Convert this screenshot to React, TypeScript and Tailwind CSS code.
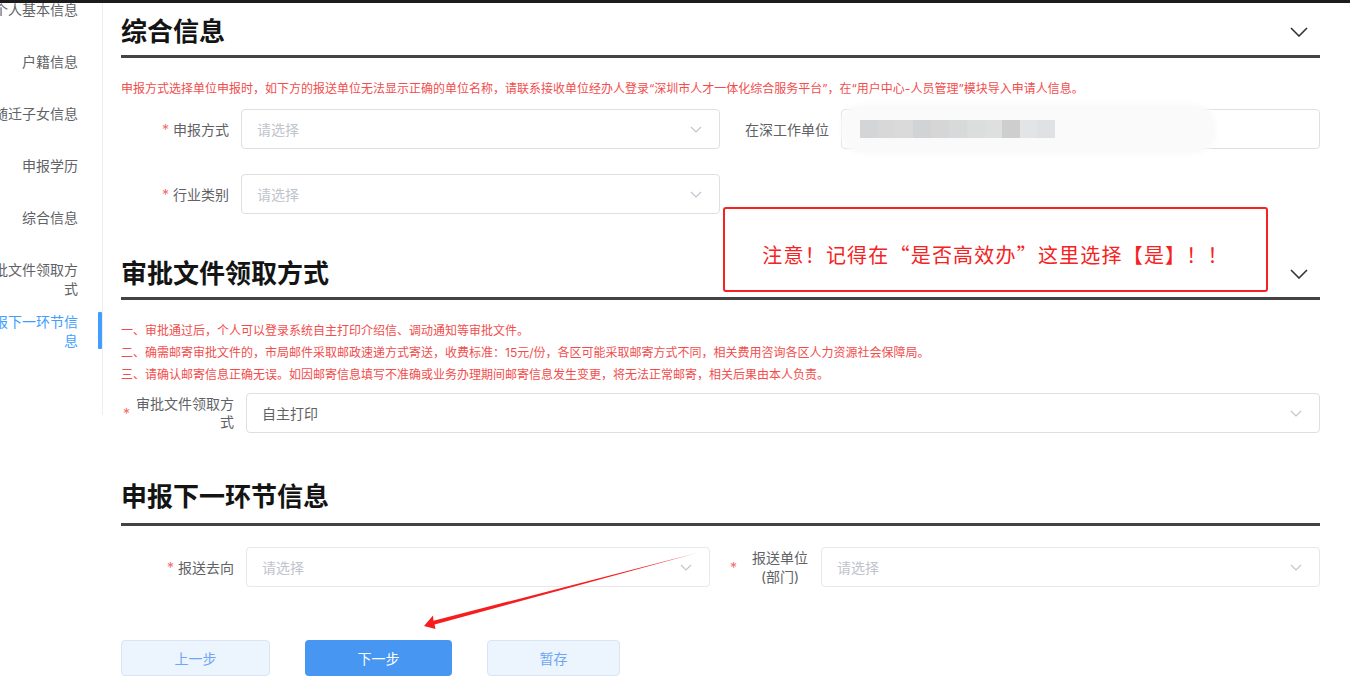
import React from 'react';

const sideItems = [
  '个人基本信息',
  '户籍信息',
  '随迁子女信息',
  '申报学历',
  '综合信息',
  '审批文件领取方式',
  '申报下一环节信息',
];

const blurBlocks = [
  ['w-[18px]', 'bg-[#d4d5d6]'],
  ['w-[17px]', 'bg-[#d8d8d8]'],
  ['w-[18px]', 'bg-[#dadada]'],
  ['w-[18px]', 'bg-[#d2d3d4]'],
  ['w-[18px]', 'bg-[#d6d6d6]'],
  ['w-[18px]', 'bg-[#d8d9da]'],
  ['w-[18px]', 'bg-[#dcdddd]'],
  ['w-[17px]', 'bg-[#dedfdf]'],
  ['w-[18px]', 'bg-[#cecece]'],
  ['w-[17px]', 'bg-[#e3e4e5]'],
  ['w-[18px]', 'bg-[#e0e1e2]'],
];

function Caret() {
  return (
    <svg width="12" height="7" viewBox="0 0 12 7" className="shrink-0">
      <path d="M1 1 L6 6 L11 1" fill="none" stroke="#c0c4cc" strokeWidth="1.1" />
    </svg>
  );
}

function Chevron() {
  return (
    <svg width="18" height="10" viewBox="0 0 18 10" className="ml-auto mr-[12px] shrink-0">
      <path d="M1 1 L9 9 L17 1" fill="none" stroke="#333" strokeWidth="1.6" />
    </svg>
  );
}

function Select({ value, light }: { value?: string; light?: boolean }) {
  return (
    <div
      className={`flex-1 h-[40px] rounded-[4px] border flex items-center justify-between pl-[15px] pr-[17px] ${
        light ? 'border-[#e6e8ee]' : 'border-[#dcdfe6]'
      }`}
    >
      <span className={`text-[14px] ${value ? 'text-[#606266]' : 'text-[#c0c4cc]'}`}>{value ?? '请选择'}</span>
      <Caret />
    </div>
  );
}

function Star() {
  return <span className="text-[#f56c6c] mr-[4px] text-[14px]">*</span>;
}

function Header({ title, chevron, tight }: { title: string; chevron?: boolean; tight?: boolean }) {
  return (
    <div className={`h-[55px] flex items-center border-b-[3px] border-[#434343] ${tight ? '' : 'pt-[6px]'}`}>
      <h2 className="text-[26px] font-bold text-[#141414] leading-none">{title}</h2>
      {chevron && <Chevron />}
    </div>
  );
}

export default function App() {
  return (
    <div className="relative w-[1350px] h-[693px] overflow-hidden bg-white font-['Inter','Noto_Sans_CJK_SC',sans-serif]">
      <div className="relative z-10 h-[3px] bg-[#1c1c1c]" />
      <div className="flex">
        {/* sidebar */}
        <aside className="-mt-[3px] w-[103px] h-[415px] shrink-0 overflow-hidden border-r border-[#eceef3]">
          {sideItems.map((t, i) => {
            const active = i === sideItems.length - 1;
            return (
              <div key={t} className="h-[52px] flex justify-end">
                <div
                  className={`w-[102px] shrink-0 text-right text-[14px] leading-[19px] ${
                    active ? 'text-[#409eff]' : 'text-[#606266]'
                  }`}
                >
                  {t}
                </div>
                <div className="w-[20px] shrink-0" />
                <div className={`w-[4px] h-[37px] shrink-0 rounded-[1px] ${active ? 'bg-[#409eff]' : ''}`} />
              </div>
            );
          })}
        </aside>

        {/* main */}
        <main className="flex-1 pl-[18px] pr-[30px]">
          <Header title="综合信息" chevron />
          <p className="mt-[21px] text-[12px] leading-[20px] text-[#f24d4d]">
            申报方式选择单位申报时，如下方的报送单位无法显示正确的单位名称，请联系接收单位经办人登录“深圳市人才一体化综合服务平台”，在“用户中心-人员管理”模块导入申请人信息。
          </p>
          <div className="mt-[10px] flex">
            <div className="w-[599px] flex">
              <div className="w-[120px] pr-[12px] flex items-center justify-end text-[14px] text-[#606266]">
                <Star />
                申报方式
              </div>
              <Select />
            </div>
            <div className="flex-1 flex">
              <div className="w-[121px] pr-[12px] flex items-center justify-end text-[14px] text-[#606266]">
                在深工作单位
              </div>
              <div className="relative flex-1 h-[40px] rounded-[4px] border border-[#dcdfe6] flex items-center pl-[18px]">
                <div className="absolute left-[-2px] top-[-6px] bottom-[-6px] w-[376px] rounded-[22px] bg-[#fafafa] blur-[2px]" />
                <div className="relative flex h-[18px]">
                  {blurBlocks.map(([w, c], i) => (
                    <div key={i} className={`${w} ${c} h-full`} />
                  ))}
                </div>
              </div>
            </div>
          </div>
          <div className="mt-[25px] flex">
            <div className="w-[599px] flex">
              <div className="w-[120px] pr-[12px] flex items-center justify-end text-[14px] text-[#606266]">
                <Star />
                行业类别
              </div>
              <Select />
            </div>
          </div>

          <div className="mt-[31px]">
            <Header title="审批文件领取方式" chevron />
          </div>
          <div className="mt-[20px] text-[12px] leading-[22px] text-[#f24d4d]">
            <p>一、审批通过后，个人可以登录系统自主打印介绍信、调动通知等审批文件。</p>
            <p>二、确需邮寄审批文件的，市局邮件采取邮政速递方式寄送，收费标准：15元/份，各区可能采取邮寄方式不同，相关费用咨询各区人力资源社会保障局。</p>
            <p>三、请确认邮寄信息正确无误。如因邮寄信息填写不准确或业务办理期间邮寄信息发生变更，将无法正常邮寄，相关后果由本人负责。</p>
          </div>
          <div className="mt-[7px] flex">
            <div className="w-[125px] pr-[12px] pl-[2px] flex items-center justify-between">
              <span className="text-[#f56c6c] text-[14px]">*</span>
              <span className="w-[98px] text-right text-[14px] leading-[18px] text-[#606266]">审批文件领取方式</span>
            </div>
            <Select value="自主打印" />
          </div>

          <div className="mt-[38px]">
            <Header title="申报下一环节信息" tight />
          </div>
          <div className="mt-[21px] flex">
            <div className="w-[589px] flex">
              <div className="w-[125px] pr-[12px] flex items-center justify-end text-[14px] text-[#606266]">
                <Star />
                报送去向
              </div>
              <Select light />
            </div>
            <div className="flex-1 flex">
              <div className="w-[111px] pr-[12px] flex items-center justify-end">
                <span className="text-[#f56c6c] text-[14px]">*</span>
                <span className="ml-[14px] w-[58px] text-center text-[14px] leading-[19px] text-[#606266]">报送单位(部门)</span>
              </div>
              <Select light />
            </div>
          </div>

          <div className="mt-[53px] flex gap-[35px]">
            <button className="w-[149px] h-[36px] rounded-[4px] border border-[#d9e5f5] bg-[#ecf4fe] text-[14px] text-[#6ea6f3]">
              上一步
            </button>
            <button className="w-[147px] h-[36px] rounded-[4px] bg-[#4696f2] text-[14px] text-white">下一步</button>
            <button className="w-[133px] h-[36px] rounded-[4px] border border-[#d9e5f5] bg-[#ecf4fe] text-[14px] text-[#6ea6f3]">
              暂存
            </button>
          </div>
        </main>
      </div>

      {/* annotation box */}
      <div className="absolute left-[723px] top-[207px] w-[545px] h-[85px] border-2 border-[#f52222] rounded-[3px] bg-white flex items-center justify-center pt-[11px]">
        <span className="font-['Noto_Sans_CJK_SC',sans-serif] text-[20px] text-[#f52222] tracking-[1.2px]">
          注意！记得在“是否高效办”这里选择【是】！！
        </span>
      </div>

      {/* annotation arrow */}
      <svg className="absolute left-0 top-0 pointer-events-none" width="1350" height="693">
        <polygon
          points="424,626 433,615.5 433.5,620.8 697,553 434.6,624.5 435.5,629"
          fill="#f51d1d"
        />
      </svg>
    </div>
  );
}
